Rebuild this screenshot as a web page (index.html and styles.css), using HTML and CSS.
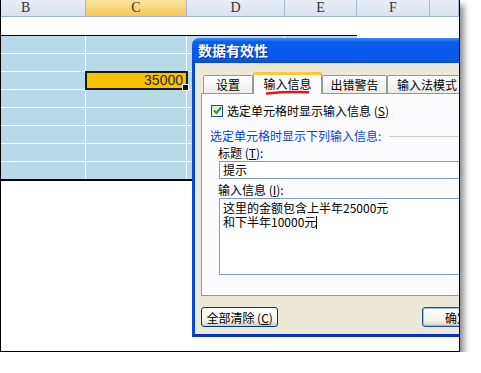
FILE: index.html
```html
<!DOCTYPE html>
<html lang="zh-CN">
<head>
  <meta charset="UTF-8">
  <title>数据有效性</title>
  <link rel="stylesheet" href="styles.css">
</head>
<body>
  <div class="shot">
    <div class="sheet">
      <div class="colhead">
        <div class="ch cb">B</div>
        <div class="ch cc on">C</div>
        <div class="ch cd">D</div>
        <div class="ch ce">E</div>
        <div class="ch cf">F</div>
        <div class="ch cg"></div>
      </div>
      <div class="blank"></div>
      <div class="sel">
        <div class="srow"><div class="cell cb"></div><div class="cell cc"></div><div class="cell cd"></div><div class="cell ce"></div></div>
        <div class="srow"><div class="cell cb"></div><div class="cell cc"></div><div class="cell cd"></div><div class="cell ce"></div></div>
        <div class="srow"><div class="cell cb"></div><div class="cell cc active">35000</div><div class="cell cd"></div><div class="cell ce"></div></div>
        <div class="srow"><div class="cell cb"></div><div class="cell cc"></div><div class="cell cd"></div><div class="cell ce"></div></div>
        <div class="srow"><div class="cell cb"></div><div class="cell cc"></div><div class="cell cd"></div><div class="cell ce"></div></div>
        <div class="srow"><div class="cell cb"></div><div class="cell cc"></div><div class="cell cd"></div><div class="cell ce"></div></div>
        <div class="srow"><div class="cell cb"></div><div class="cell cc"></div><div class="cell cd"></div><div class="cell ce"></div></div>
        <div class="srow last"><div class="cell cb"></div><div class="cell cc"></div><div class="cell cd"></div><div class="cell ce"></div></div>
      </div>
    </div>

    <div class="dialog">
      <div class="titlebar">数据有效性</div>
      <div class="dlg-body">
        <div class="tabs">
          <div class="tab t1">设置</div>
          <div class="tab t2 active">输入信息</div>
          <div class="tab t3">出错警告</div>
          <div class="tab t4">输入法模式</div>
        </div>
        <div class="panel">
          <div class="check">
            <span class="box">
              <svg width="9" height="9" viewBox="0 0 9 9"><path d="M1 4.5 L3.5 7 L8 1.5" fill="none" stroke="#21a121" stroke-width="2"/></svg>
            </span>
            <span>选定单元格时显示输入信息 (<u>S</u>)</span>
          </div>
          <div class="group"><span>选定单元格时显示下列输入信息:</span><i class="rule"></i></div>
          <div class="field-label">标题 (<u>T</u>):</div>
          <div class="input">提示</div>
          <div class="field-label">输入信息 (<u>I</u>):</div>
          <div class="textarea">
            <p>这里的金额包含上半年25000元</p>
            <p>和下半年10000元<span class="caret"></span></p>
          </div>
        </div>
        <div class="buttons">
          <button class="btn">全部清除 (<u>C</u>)</button>
          <button class="btn ok">确定</button>
        </div>
      </div>
    </div>

    <svg class="mark" width="50" height="8" viewBox="0 0 50 8">
      <path d="M2 4.5 Q 20 2.5 43 3.2" fill="none" stroke="#e5121c" stroke-width="2.6" stroke-linecap="round"/>
    </svg>
  </div>
</body>
</html>
```

FILE: styles.css
```css
* {
  margin: 0;
  padding: 0;
  box-sizing: border-box;
}

body {
  background-color: #fff;
  font-family: "Liberation Sans", "Noto Sans CJK SC", sans-serif;
  font-size: 12px;
  color: #000;
}

.shot {
  position: relative;
  width: 460px;
  height: 352px;
  border-left: 1px solid #000;
  border-right: 1px solid #000;
  border-bottom: 1px solid #000;
  overflow: hidden;
  background-color: #fff;
  box-shadow: 4px 5px 6px rgba(0, 0, 0, 0.45);
}

/* spreadsheet */
.cb { width: 85px; }
.cc { width: 101px; }
.cd { width: 98px; }
.ce { width: 72px; }
.cf { width: 73px; }
.cg { flex: 1; }

.colhead {
  display: flex;
  height: 17px;
  background: linear-gradient(#e9eef6, #d8e1ee);
  border-bottom: 1px solid #9fb3cc;
}

.ch {
  border-right: 1px solid #a9bad0;
  text-align: center;
  font-family: "Liberation Serif", serif;
  font-size: 14px;
  line-height: 16px;
  color: #333;
}

/* column B is partly scrolled off to the left */
.ch.cb {
  text-align: left;
  padding-left: 20px;
}

.ch.on {
  background: linear-gradient(#fbe4a2, #f4c856);
}

.blank {
  height: 18px;
}

.sel {
  width: 356px;
  border-top: 1px solid #000;
  background-color: #b8d9e7;
}

.srow {
  display: flex;
  height: 18px;
  border-bottom: 1px solid #fff;
}

.srow.last {
  height: 19px;
  border-bottom: 2px solid #000;
}

.cell {
  border-right: 1px solid #fff;
}

.cell.ce {
  border-right: none;
}

.cell.active {
  position: relative;
  background-color: #f8c000;
  outline: 2px solid #1a1a1a;
  outline-offset: -1px;
  text-align: right;
  padding-right: 3px;
  font-size: 14px;
  line-height: 17px;
  color: #2a2a2a;
}

.cell.active::after {
  content: "";
  position: absolute;
  right: -3px;
  bottom: -2px;
  width: 5px;
  height: 5px;
  background-color: #111;
  border: 1px solid #fff;
}

/* dialog window */
.dialog {
  position: absolute;
  left: 191px;
  top: 38px;
  width: 300px;
  height: 299px;
  display: flex;
  flex-direction: column;
}

.titlebar {
  height: 25px;
  padding-left: 6px;
  border-radius: 7px 7px 0 0;
  background: linear-gradient(#3f8cf6 0, #0a5de8 4px, #0758ec 50%, #0a5ae8 85%, #0548d0 100%);
  color: #fff;
  font-family: "Noto Sans CJK SC", sans-serif;
  font-weight: bold;
  font-size: 14px;
  line-height: 25px;
  text-shadow: 1px 1px 0 #0b2e8a;
}

.dlg-body {
  flex: 1;
  background-color: #ece9d8;
  border-left: 3px solid #0a48d8;
  border-bottom: 3px solid #0732c4;
  padding: 8px 0 0 6px;
}

.tabs {
  display: flex;
  align-items: flex-end;
  height: 22px;
  padding-left: 2px;
}

.tab {
  height: 18px;
  border: 1px solid #919b9c;
  border-bottom: none;
  border-radius: 2px 2px 0 0;
  background: linear-gradient(#fff, #ecebe5);
  text-align: center;
  font-family: "Noto Sans CJK SC", sans-serif;
  line-height: 17px;
}

.t1 { width: 50px; }
.t2 { width: 69px; }
.t3 { width: 65px; }
.t4 { width: 80px; }

.tab.active {
  height: 22px;
  margin-bottom: -1px;
  position: relative;
  background-color: #fcfcfe;
  background-image: none;
  border-top: 3px solid #ffc83c;
  line-height: 17px;
}

.panel {
  height: 203px;
  border: 1px solid #919b9c;
  background-color: #fcfcfe;
  padding: 10px 0 0 8px;
  font-family: "Noto Sans CJK SC", sans-serif;
}

.check {
  display: flex;
  align-items: center;
  gap: 4px;
  height: 13px;
  line-height: 13px;
  padding-left: 1px;
}

.box {
  display: flex;
  align-items: center;
  justify-content: center;
  width: 12px;
  height: 12px;
  border: 1px solid #1c5180;
  background: linear-gradient(135deg, #dcdcd7, #fff);
}

.group {
  display: flex;
  align-items: center;
  gap: 8px;
  margin-top: 13px;
  height: 12px;
  line-height: 12px;
  color: #0046d5;
}

.group .rule {
  flex: 1;
  height: 1px;
  background-color: #d0d0bf;
}

.field-label {
  margin-top: 5px;
  padding-left: 8px;
  height: 12px;
  line-height: 12px;
}

.input {
  margin: 2px 0 0 9px;
  height: 18px;
  border: 1px solid #7f9db9;
  background-color: #fff;
  padding-left: 3px;
  line-height: 16px;
}

.field-label + .textarea {
  margin-top: 2px;
}

.textarea {
  margin-left: 9px;
  height: 77px;
  border: 1px solid #7f9db9;
  background-color: #fff;
  padding: 2px 0 0 3px;
}

.textarea p {
  height: 14px;
  line-height: 14px;
  overflow: visible;
}

.caret {
  display: inline-block;
  width: 1px;
  height: 13px;
  vertical-align: -2px;
  background-color: #000;
}

.buttons {
  display: flex;
  gap: 144px;
  margin-top: 11px;
}

.btn {
  height: 20px;
  width: 83px;
  border: 1px solid #003c74;
  border-radius: 3px;
  background: linear-gradient(#fff, #f4f3ee 70%, #d6d0c5);
  font-family: "Noto Sans CJK SC", sans-serif;
  font-size: 12px;
  line-height: 17px;
  color: #000;
}

.btn.ok {
  width: 75px;
  border-color: #2a4d8f;
  box-shadow: inset 0 0 0 1px #9cb8ea;
}

.mark {
  position: absolute;
  left: 264px;
  top: 89px;
}
```
